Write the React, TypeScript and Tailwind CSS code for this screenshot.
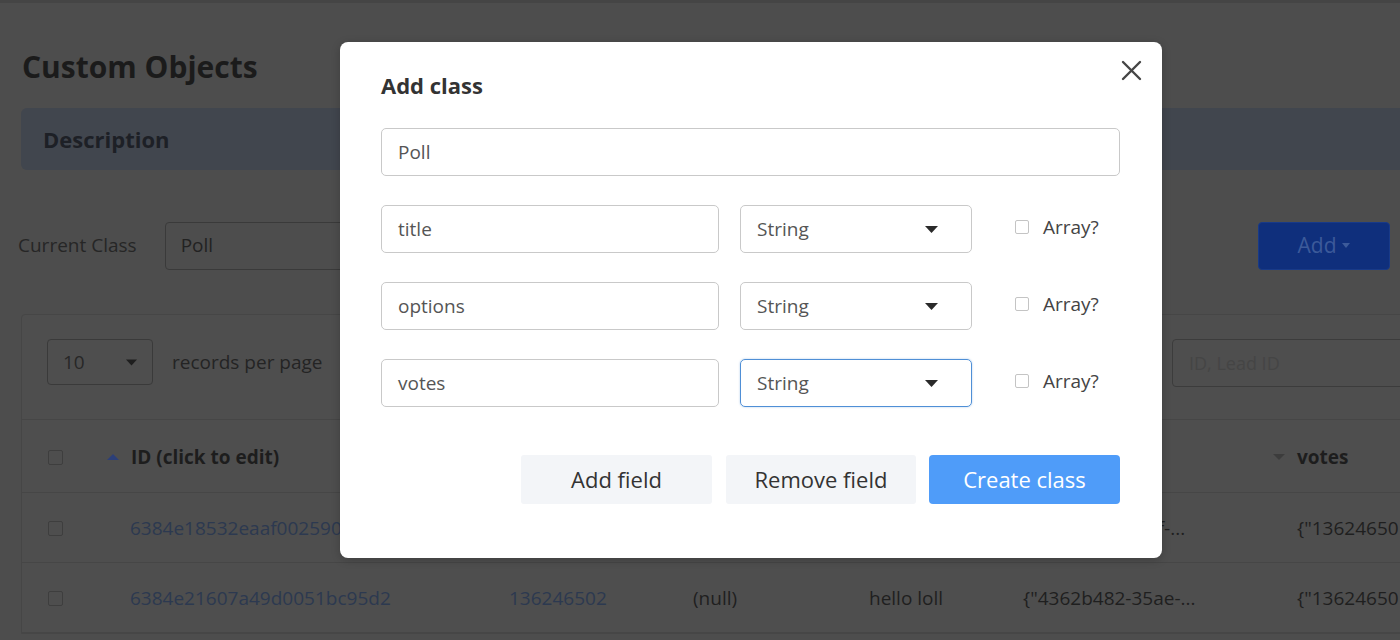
import React from "react";

const Caret = ({ className }: { className?: string }) => (
  <svg width="13" height="7" viewBox="0 0 13 7" className={className}>
    <path d="M0 0 L13 0 L6.5 7 Z" fill="currentColor" />
  </svg>
);

const BgCheckbox = () => (
  <div className="w-[15px] h-[15px] rounded-[2px] border border-[#3e3e3e]" />
);

const FieldRow = ({ name, focused }: { name: string; focused?: boolean }) => (
  <div className="mt-[29px] flex items-center">
    <div className="w-[338px] h-[48px] border border-[#c9c9c9] rounded-[5px] pl-[16px] flex items-center text-[19px] text-[#555]">
      {name}
    </div>
    <div
      className={
        "ml-[21px] w-[232px] h-[48px] rounded-[5px] pl-[16px] pr-[33px] flex items-center justify-between text-[19px] text-[#555] border " +
        (focused ? "border-[#4f8fd6] shadow-[0_0_2px_rgba(79,143,214,0.5)]" : "border-[#c9c9c9]")
      }
    >
      <span>String</span>
      <Caret className="text-[#2a2a2a]" />
    </div>
    <div className="ml-[43px] -mt-[4px] flex items-center">
      <div className="w-[14px] h-[14px] rounded-[2px] border border-[#c4c4c4]" />
      <span className="ml-[14px] text-[19px] text-[#444]">Array?</span>
    </div>
  </div>
);

export default function App() {
  const cols = "grid grid-cols-[83px_378px_184px_176px_154px_274px_300px]";
  return (
    <div className="relative w-[1400px] h-[640px] overflow-hidden bg-[#4d4d4d] font-['Open_Sans','Liberation_Sans',sans-serif]">
      {/* dimmed page */}
      <div className="h-[3px] bg-[#454545]" />
      <div className="pl-[21px]">
        <h1 className="pt-[44px] ml-[1px] text-[30px] leading-[40px] font-bold text-[#1b1b1b]">
          Custom Objects
        </h1>
        <div className="mt-[21px] h-[62px] w-[1400px] rounded-l-[6px] bg-[#41464e] flex items-center pl-[22px] text-[22px] font-bold text-[#1d2026]">
          Description
        </div>
        <div className="mt-[51px] h-[49px] w-[1369px] flex items-center">
          <span className="-ml-[3px] text-[19px] text-[#262626]">Current Class</span>
          <div className="ml-[28px] w-[340px] h-[48px] border border-[#3a3a3a] rounded-[4px] flex items-center pl-[15px] text-[19px] text-[#222]">
            Poll
          </div>
          <div className="ml-auto w-[132px] h-[48px] rounded-[4px] bg-[#0f2f7c] border border-[#183a88] flex items-center justify-center gap-[6px] text-[21px] text-[#3c5a9a]">
            <span>Add</span>
            <svg width="8" height="5" viewBox="0 0 8 5">
              <path d="M0 0 L8 0 L4 5 Z" fill="#3c5a9a" />
            </svg>
          </div>
        </div>
        {/* table card */}
        <div className="mt-[44px] w-[1420px] bg-[#4e4e4e] border border-[#464646] rounded-tl-[4px]">
          <div className="h-[105px] flex items-start pt-[24px] pl-[25px] border-b border-[#464646]">
            <div className="w-[106px] h-[46px] border border-[#3a3a3a] rounded-[4px] flex items-center justify-between pl-[15px] pr-[15px] text-[19px] text-[#272727]">
              <span>10</span>
              <Caret className="text-[#1e1e1e] w-[11px]" />
            </div>
            <span className="ml-[19px] mt-[9px] text-[19px] text-[#242424]">records per page</span>
            <div className="ml-auto mr-[0px] w-[268px] h-[48px] border border-[#3c3c3c] rounded-[4px] flex items-center pl-[16px] text-[18px] text-[#454545]">
              ID, Lead ID
            </div>
          </div>
          <div className={cols + " h-[73px] pt-[2px] items-center border-b border-[#464646] text-[19px] font-bold text-[#1d1d1d]"}>
            <div className="pl-[26px]"><BgCheckbox /></div>
            <div className="flex items-center">
              <svg width="26" height="6" viewBox="0 0 26 6"><path d="M2 6 L8 0 L14 6 Z" fill="#2c3f78" /></svg>
              <span>ID (click to edit)</span>
            </div>
            <div />
            <div />
            <div />
            <div />
            <div className="flex items-center">
              <svg width="26" height="6" viewBox="0 0 26 6"><path d="M2 0 L14 0 L8 6 Z" fill="#3c3c3c" /></svg>
              <span>votes</span>
            </div>
          </div>
          {[
            ["6384e18532eaaf0025906c1e", "136246502", "(null)", "poll test", '{"8c1e24f0-72bf-...'],
            ["6384e21607a49d0051bc95d2", "136246502", "(null)", "hello loll", '{"4362b482-35ae-...'],
          ].map((r, i) => (
            <div key={i} className={cols + " h-[70px] pt-[2px] items-center border-b border-[#464646] text-[19px] text-[#1f1f1f] whitespace-nowrap"}>
              <div className="pl-[26px]"><BgCheckbox /></div>
              <div className="pl-[25px] text-[#2c3950]">{r[0]}</div>
              <div className="pl-[26px] text-[#2c3950]">{r[1]}</div>
              <div className="pl-[26px]">{r[2]}</div>
              <div className="pl-[26px]">{r[3]}</div>
              <div className="pl-[26px]">{r[4]}</div>
              <div className="pl-[26px]">{'{"13624650'}</div>
            </div>
          ))}
        </div>
      </div>

      {/* modal */}
      <div className="absolute left-[340px] top-[42px] w-[822px] h-[516px] bg-white rounded-[8px] shadow-[0_2px_10px_rgba(0,0,0,0.2)] pl-[41px] pr-[42px] flex flex-col">
        <button className="absolute right-[20px] top-[17px] w-[22px] h-[22px] flex items-center justify-center">
          <svg width="21" height="21" viewBox="0 0 21 21">
            <path d="M2 2 L19 19 M19 2 L2 19" stroke="#454545" strokeWidth="2.4" strokeLinecap="round" />
          </svg>
        </button>
        <h2 className="pt-[28px] text-[22px] leading-[30px] font-bold text-[#333]">Add class</h2>
        <div className="mt-[28px] h-[48px] w-full border border-[#c9c9c9] rounded-[5px] pl-[16px] flex items-center text-[19px] text-[#555]">
          Poll
        </div>
        <FieldRow name="title" />
        <FieldRow name="options" />
        <FieldRow name="votes" focused />
        <div className="mt-[48px] flex justify-end">
          <div className="w-[191px] h-[49px] rounded-[3px] bg-[#f3f5f8] flex items-center justify-center text-[22px] text-[#333]">
            Add field
          </div>
          <div className="ml-[14px] w-[190px] h-[49px] rounded-[3px] bg-[#f3f5f8] flex items-center justify-center text-[22px] text-[#333]">
            Remove field
          </div>
          <div className="ml-[13px] w-[191px] h-[49px] rounded-[4px] bg-[#4f9cf9] flex items-center justify-center text-[22px] text-white">
            Create class
          </div>
        </div>
      </div>
    </div>
  );
}
